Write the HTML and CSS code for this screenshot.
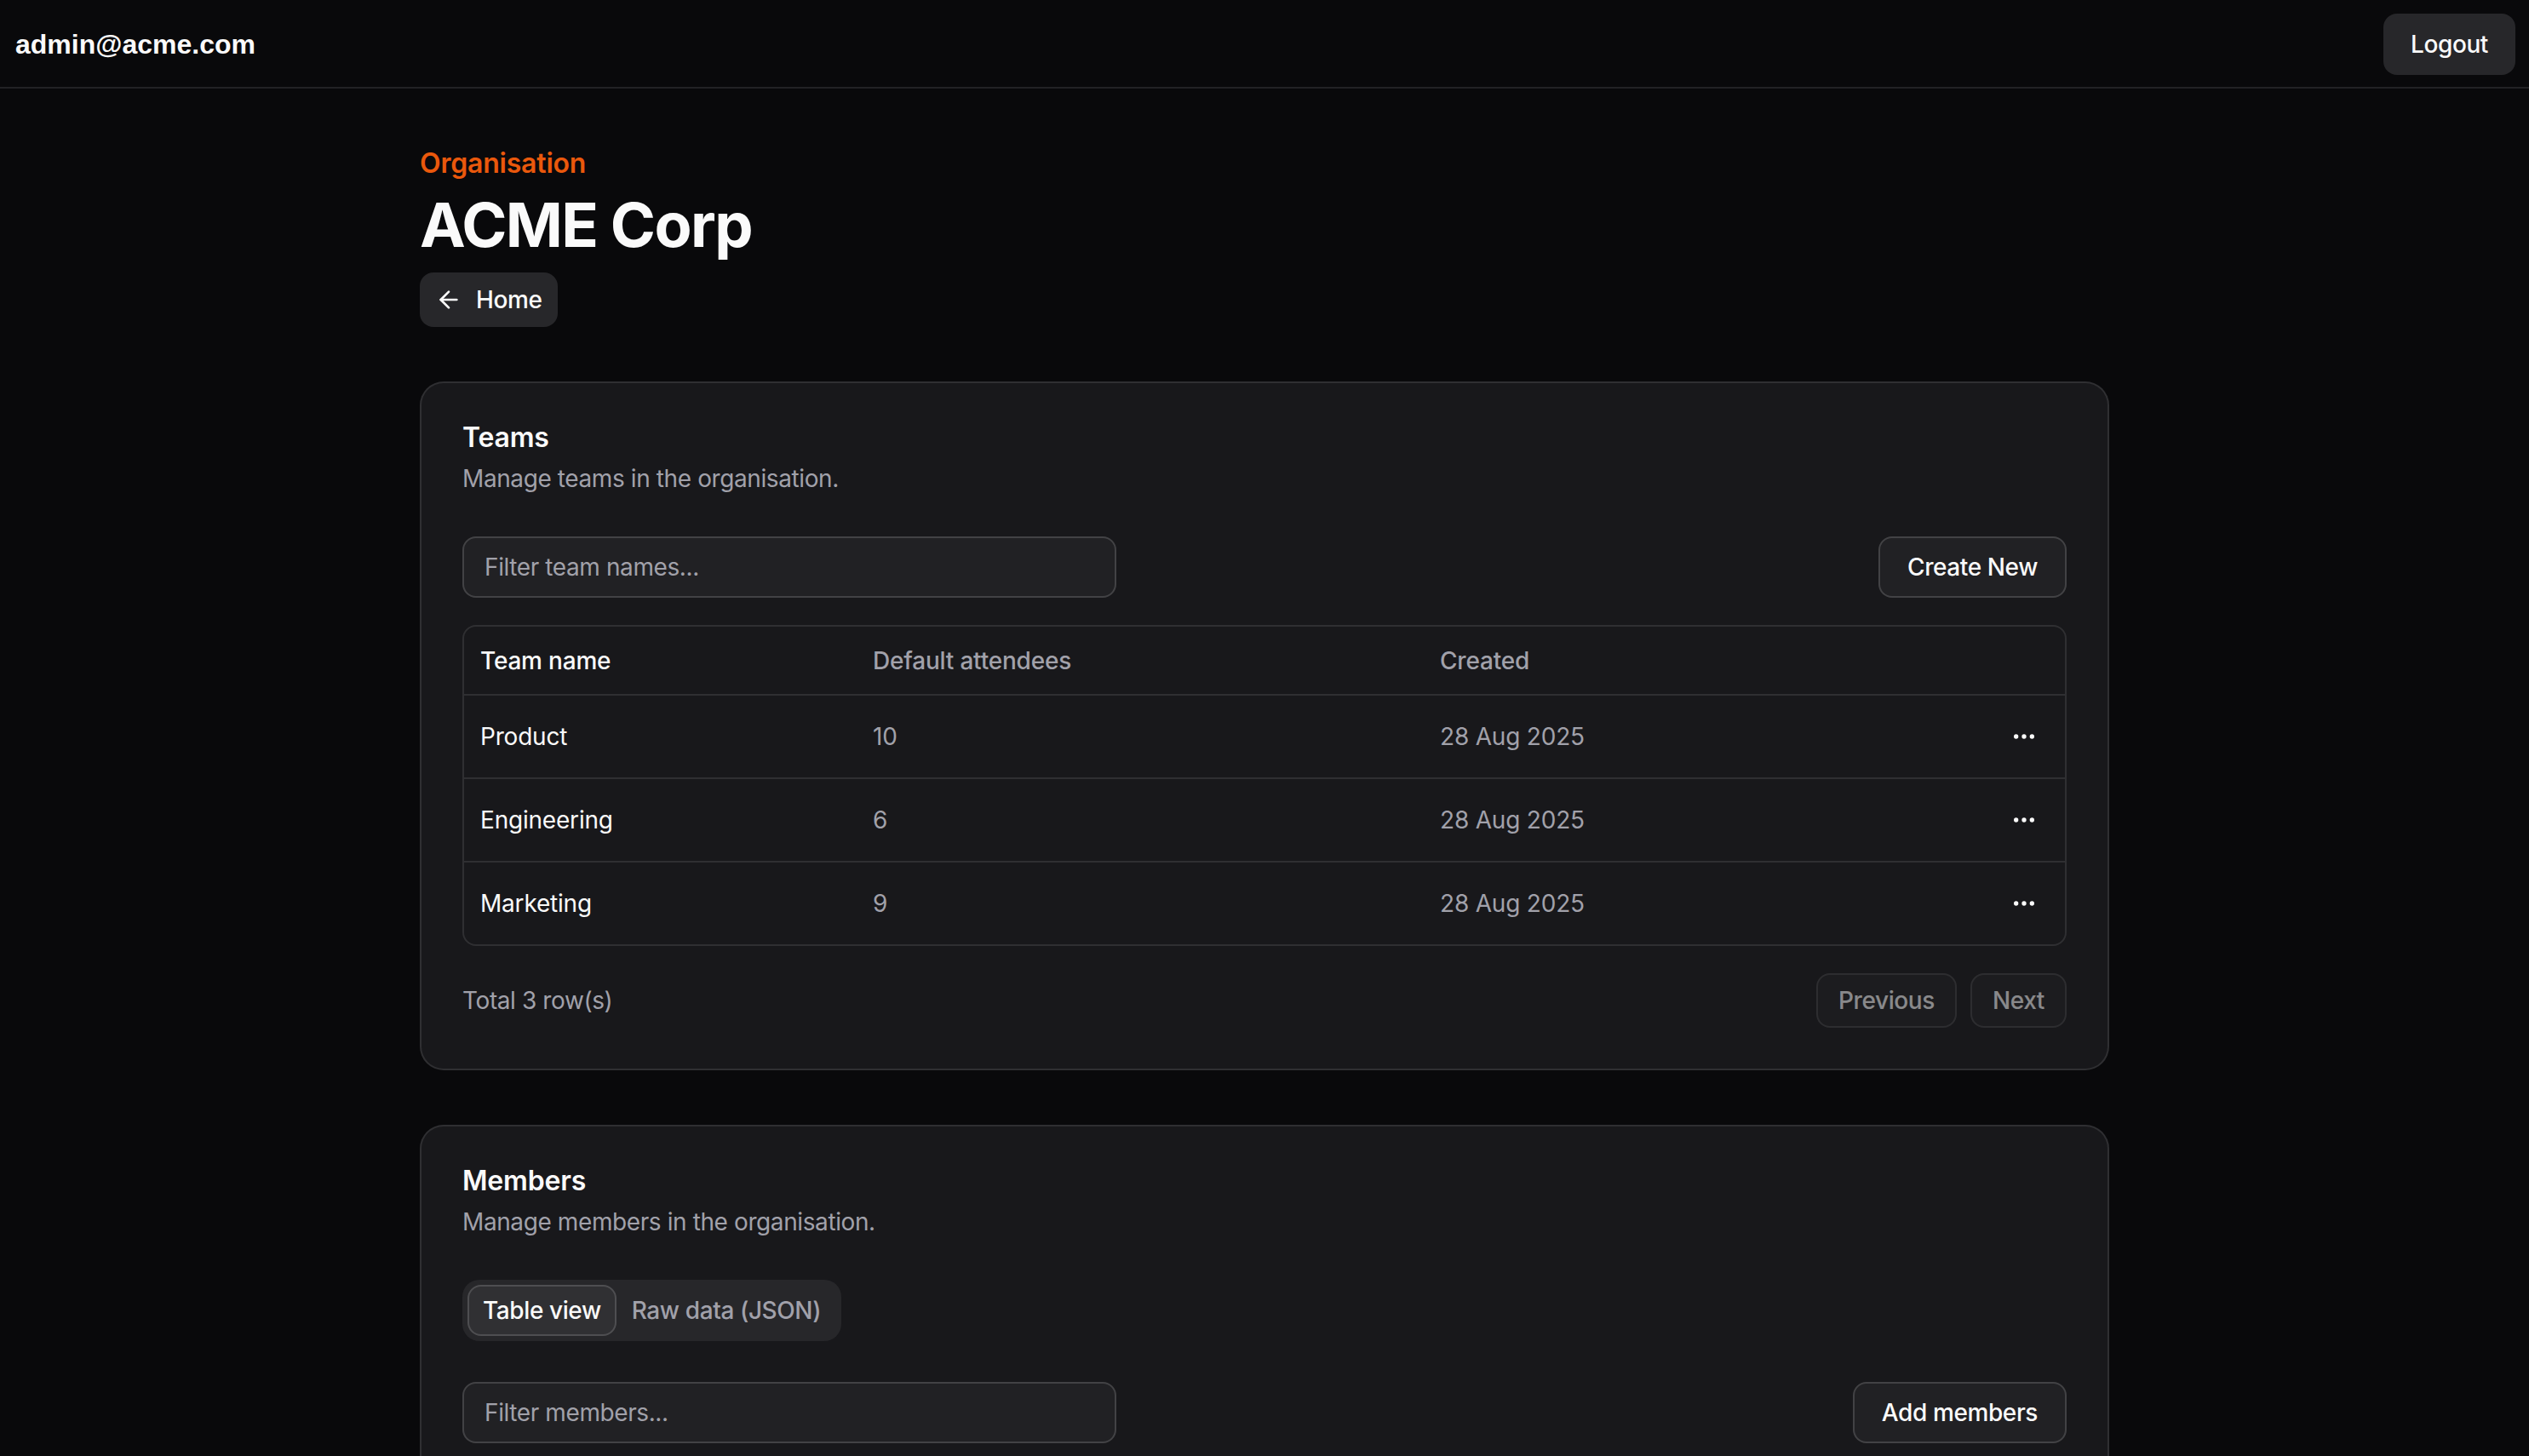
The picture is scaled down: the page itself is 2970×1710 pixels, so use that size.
FILE: index.html
```html
<!DOCTYPE html>
<html lang="en">
<head>
<meta charset="utf-8">
<title>ACME Corp – Organisation</title>
<link rel="stylesheet" href="styles.css">
</head>
<body>
<header class="topbar">
  <span class="user-email">admin@acme.com</span>
  <button class="btn btn-secondary btn-default">Logout</button>
</header>

<main class="container">
  <div class="page-head">
    <p class="eyebrow">Organisation</p>
    <h1 class="page-title">ACME Corp</h1>
    <a class="btn btn-secondary btn-home" href="#">
      <svg class="icon" viewBox="0 0 24 24" fill="none" stroke="currentColor" stroke-width="2" stroke-linecap="round" stroke-linejoin="round"><path d="m12 19-7-7 7-7"/><path d="M19 12H5"/></svg>
      Home
    </a>
  </div>

  <section class="card">
    <div class="card-header">
      <h2 class="card-title">Teams</h2>
      <p class="card-desc">Manage teams in the organisation.</p>
    </div>
    <div class="card-content">
      <div class="toolbar">
        <input class="input" type="text" placeholder="Filter team names...">
        <button class="btn btn-outline btn-default">Create New</button>
      </div>
      <div class="table-wrap">
        <table class="table">
          <colgroup><col class="c1"><col class="c2"><col><col class="c4"></colgroup>
          <thead>
            <tr><th class="strong">Team name</th><th>Default attendees</th><th>Created</th><th></th></tr>
          </thead>
          <tbody>
            <tr><td class="strong">Product</td><td>10</td><td>28 Aug 2025</td><td class="act"><button class="icon-btn"><svg class="icon" viewBox="0 0 24 24" fill="none" stroke="currentColor" stroke-width="2"><circle cx="12" cy="12" r="1"/><circle cx="19" cy="12" r="1"/><circle cx="5" cy="12" r="1"/></svg></button></td></tr>
            <tr><td class="strong">Engineering</td><td>6</td><td>28 Aug 2025</td><td class="act"><button class="icon-btn"><svg class="icon" viewBox="0 0 24 24" fill="none" stroke="currentColor" stroke-width="2"><circle cx="12" cy="12" r="1"/><circle cx="19" cy="12" r="1"/><circle cx="5" cy="12" r="1"/></svg></button></td></tr>
            <tr><td class="strong">Marketing</td><td>9</td><td>28 Aug 2025</td><td class="act"><button class="icon-btn"><svg class="icon" viewBox="0 0 24 24" fill="none" stroke="currentColor" stroke-width="2"><circle cx="12" cy="12" r="1"/><circle cx="19" cy="12" r="1"/><circle cx="5" cy="12" r="1"/></svg></button></td></tr>
          </tbody>
        </table>
      </div>
      <div class="table-footer">
        <span class="muted">Total 3 row(s)</span>
        <div class="pager">
          <button class="btn btn-outline btn-sm" disabled>Previous</button>
          <button class="btn btn-outline btn-sm" disabled>Next</button>
        </div>
      </div>
    </div>
  </section>

  <section class="card">
    <div class="card-header">
      <h2 class="card-title">Members</h2>
      <p class="card-desc">Manage members in the organisation.</p>
    </div>
    <div class="card-content">
      <div class="tabs">
        <div class="tabs-list">
          <button class="tab active">Table view</button>
          <button class="tab">Raw data (JSON)</button>
        </div>
        <div class="tab-panel">
          <div class="toolbar toolbar-pad">
            <input class="input" type="text" placeholder="Filter members...">
            <button class="btn btn-outline btn-default">Add members</button>
          </div>
          <div class="table-wrap">
            <table class="table">
              <thead>
                <tr><th class="strong">Email</th><th>Role</th><th>Joined</th></tr>
              </thead>
              <tbody>
                <tr><td class="strong">admin@acme.com</td><td>Admin</td><td>28 Aug 2025</td></tr>
                <tr><td class="strong">jane@acme.com</td><td>Member</td><td>28 Aug 2025</td></tr>
              </tbody>
            </table>
          </div>
        </div>
      </div>
    </div>
  </section>
</main>
</body>
</html>
```

FILE: styles.css
```css
* { box-sizing: border-box; }

html, body {
  margin: 0;
  padding: 0;
  background: #09090b;
  color: #fafafa;
  font-family: Inter, "Noto Sans", sans-serif;
  font-size: 28px;
  line-height: 40px;
  letter-spacing: -0.4px;
}

/* ---------- top bar ---------- */
.topbar {
  display: flex;
  align-items: center;
  justify-content: space-between;
  padding: 16px 16px 14px 16px;
  border-bottom: 2px solid #222225;
}
.user-email {
  font-family: "Liberation Sans", Arial, sans-serif;
  font-weight: 700;
  font-size: 32px;
  letter-spacing: 0;
  margin-left: 2px;
}

/* ---------- buttons ---------- */
.btn {
  display: inline-flex;
  align-items: center;
  justify-content: center;
  gap: 16px;
  font-family: Inter, sans-serif;
  font-size: 28px;
  font-weight: 500;
  line-height: 40px;
  letter-spacing: -0.4px;
  color: #fafafa;
  border-radius: 16px;
  text-decoration: none;
  white-space: nowrap;
  cursor: pointer;
}
.btn-default { height: 72px; padding: 0 32px; }
.btn-sm { height: 64px; padding: 0 24px; }
.btn-secondary { background: #27272a; border: 0; }
.btn-outline {
  background: rgba(255, 255, 255, 0.045);
  border: 2px solid rgba(255, 255, 255, 0.15);
}
.btn:disabled { opacity: 0.5; cursor: default; }

.icon { width: 32px; height: 32px; flex-shrink: 0; }

/* ---------- page ---------- */
.container {
  max-width: 2048px;
  margin: 0 auto;
  padding: 64px 32px;
  display: flex;
  flex-direction: column;
  gap: 64px;
}
.page-head { display: flex; flex-direction: column; align-items: flex-start; }
.eyebrow {
  margin: 0;
  font-size: 32px;
  line-height: 48px;
  font-weight: 600;
  letter-spacing: -0.2px;
  color: #ea580c;
}
.page-title {
  margin: 8px 0 0;
  font-size: 72px;
  line-height: 80px;
  font-weight: 700;
  letter-spacing: -1.6px;
}
.btn-home {
  margin-top: 16px;
  height: 64px;
  padding: 0 19px 0 18px;
}

/* ---------- card ---------- */
.card {
  background: #18181b;
  border: 2px solid rgba(255, 255, 255, 0.1);
  border-radius: 28px;
  padding: 48px 0;
  display: flex;
  flex-direction: column;
  gap: 48px;
}
.card-header { padding: 0 48px; display: flex; flex-direction: column; gap: 12px; }
.card-title { margin: 0; font-size: 32px; line-height: 32px; font-weight: 600; letter-spacing: -0.2px; }
.card-desc { margin: 0; font-size: 28px; line-height: 40px; color: #a1a1aa; }
.card-content { padding: 0 48px; }

.toolbar {
  display: flex;
  align-items: center;
  justify-content: space-between;
  margin-bottom: 32px;
}
.toolbar-pad { margin-bottom: 0; padding: 32px 0; }

.input {
  width: 768px;
  height: 72px;
  padding: 0 24px;
  border: 2px solid rgba(255, 255, 255, 0.15);
  background: rgba(255, 255, 255, 0.045);
  border-radius: 16px;
  font-family: Inter, sans-serif;
  font-size: 28px;
  letter-spacing: -0.4px;
  color: #fafafa;
  outline: none;
}
.input::placeholder { color: #a1a1aa; }

/* ---------- table ---------- */
.table-wrap {
  border: 2px solid rgba(255, 255, 255, 0.1);
  border-radius: 16px;
  overflow: hidden;
}
.table { width: 100%; border-collapse: collapse; letter-spacing: -0.2px; }
.table col.c1 { width: 461px; }
.table col.c2 { width: 666px; }
.table col.c4 { width: 96px; }
.table th {
  height: 80px;
  padding: 0 16px 0 19px;
  text-align: left;
  font-weight: 500;
  color: #a1a1aa;
  border-bottom: 2px solid rgba(255, 255, 255, 0.1);
}
.table td {
  height: 96px;
  padding: 16px 16px 16px 19px;
  color: #a1a1aa;
  vertical-align: middle;
}
.table tbody tr + tr td { border-top: 2px solid rgba(255, 255, 255, 0.1); }
.table .strong { color: #fafafa; }
.table td.act { padding: 16px 16px 16px 0; text-align: right; }

.icon-btn {
  width: 64px;
  height: 64px;
  display: inline-flex;
  align-items: center;
  justify-content: center;
  background: transparent;
  border: 0;
  border-radius: 16px;
  color: #fafafa;
  padding: 0;
  vertical-align: middle;
}

.table-footer {
  display: flex;
  align-items: center;
  justify-content: space-between;
  padding-top: 32px;
}
.muted { color: #a1a1aa; }
.pager { display: flex; gap: 16px; }

/* ---------- tabs ---------- */
.tabs { display: flex; flex-direction: column; gap: 16px; }
.tabs-list {
  display: inline-flex;
  align-self: flex-start;
  height: 72px;
  padding: 6px;
  background: #27272a;
  border-radius: 20px;
}
.tab {
  height: 100%;
  padding: 0 16px;
  border: 2px solid transparent;
  border-radius: 16px;
  background: transparent;
  font-family: Inter, sans-serif;
  font-size: 28px;
  font-weight: 500;
  letter-spacing: -0.4px;
  color: #a1a1aa;
  cursor: pointer;
}
.tab.active {
  background: rgba(255, 255, 255, 0.045);
  border-color: rgba(255, 255, 255, 0.15);
  color: #fafafa;
}
```
